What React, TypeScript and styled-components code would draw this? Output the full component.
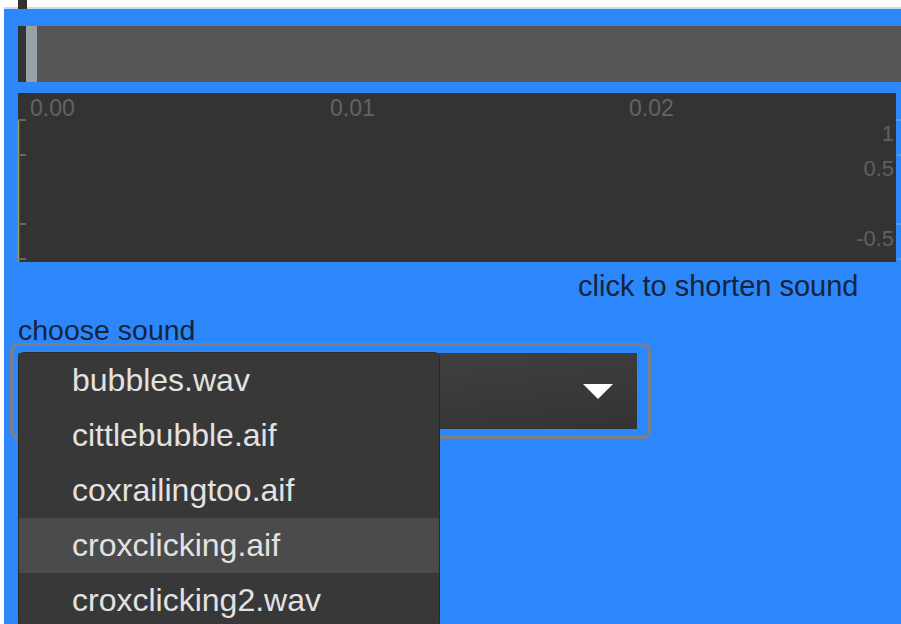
import styled, { createGlobalStyle } from 'styled-components'

const GlobalStyle = createGlobalStyle`
  html, body {
    margin: 0;
    height: 100%;
    overflow: hidden;
    background: #ffffff;
    font-family: "Liberation Sans", Arial, sans-serif;
  }
  #root {
    height: 100%;
  }
`

export const Page = styled.div`
  display: flex;
  flex-direction: column;
  height: 100%;
  padding-left: 4px;
  box-sizing: border-box;
`

export const TopStrip = styled.div`
  height: 7px;
  flex: none;
  display: flex;
  padding-left: 14px;
`

export const TopStub = styled.div`
  width: 9px;
  height: 9px;
  flex: none;
  background: #333333;
  position: relative;
  z-index: 1;
`

export const Panel = styled.div`
  flex: 1;
  background: #2c88fa;
  border-top: 2px solid #c9dcec;
  padding: 17px 0 0 14px;
  display: flex;
  flex-direction: column;
`

export const Timeline = styled.div`
  height: 56px;
  display: flex;
  background: #565656;
`

export const TimelineStart = styled.div`
  width: 8px;
  background: #333333;
`

export const Playhead = styled.div`
  width: 11px;
  background: #9aa0a4;
`

export const Chart = styled.div`
  position: relative;
  margin: 11px 5px 0 0;
  height: 169px;
  background: #333333;
`

export const TimeLabel = styled.span<{ $left: number }>`
  position: absolute;
  top: 4px;
  left: ${p => p.$left}px;
  font-size: 23px;
  line-height: 23px;
  color: #636363;
`

export const LevelLabel = styled.span<{ $top: number }>`
  position: absolute;
  right: 2px;
  top: ${p => p.$top}px;
  font-size: 22px;
  line-height: 22px;
  color: #616161;
`

const Axis = styled.svg`
  position: absolute;
  top: 0;
  left: 0;
  overflow: visible;
`

export const Hint = styled.div`
  margin: 10px 0 0 0;
  padding-left: 560px;
  font-size: 29px;
  line-height: 28px;
  color: #16233a;
`

export const FieldLabel = styled.div`
  margin-top: 16px;
  font-size: 28.5px;
  line-height: 28px;
  color: #16233a;
`

export const SelectFrame = styled.div`
  position: relative;
  align-self: flex-start;
  margin: -1px 0 0 -8px;
  padding: 7px 11px 7px 5px;
  border: 3px solid #7c7f86;
  border-radius: 8px;
`

export const SelectBox = styled.div`
  width: 619px;
  height: 76px;
  display: flex;
  align-items: center;
  justify-content: flex-end;
  padding-right: 24px;
  box-sizing: border-box;
  background: linear-gradient(172deg, #4a4a4a 0%, #3c3c3c 55%, #333333 100%);
`

export const Caret = styled.div`
  width: 0;
  height: 0;
  border-left: 15px solid transparent;
  border-right: 15px solid transparent;
  border-top: 15px solid #ffffff;
`

export const Menu = styled.ul`
  position: absolute;
  left: 5px;
  top: 6px;
  width: 420px;
  margin: 0;
  padding: 0;
  list-style: none;
  background: #383838;
  border: 1px solid #2b2b2b;
  border-radius: 6px;
  overflow: hidden;
  z-index: 2;
`

export const MenuItem = styled.li<{ $active?: boolean }>`
  height: 55px;
  line-height: 55px;
  padding-left: 53px;
  font-size: 32px;
  color: #e2e2e2;
  background: ${p => (p.$active ? '#4b4b4b' : 'transparent')};
  white-space: nowrap;
`

const times = [
  { text: '0.00', left: 12 },
  { text: '0.01', left: 312 },
  { text: '0.02', left: 611 },
]

const levels = [
  { text: '1', top: 30 },
  { text: '0.5', top: 65 },
  { text: '-0.5', top: 135 },
]

const ticks = [27, 62, 131, 166]

const sounds = [
  'bubbles.wav',
  'cittlebubble.aif',
  'coxrailingtoo.aif',
  'croxclicking.aif',
  'croxclicking2.wav',
]

const App = () => {
  return (
    <>
      <GlobalStyle />
      <Page>
        <TopStrip>
          <TopStub />
        </TopStrip>
        <Panel>
          <Timeline>
            <TimelineStart />
            <Playhead />
          </Timeline>
          <Chart>
            <Axis width="878" height="169">
              <line x1="0.5" y1="27" x2="0.5" y2="169" stroke="#9c9a5c" strokeWidth="1.5" />
              {ticks.map(y => (
                <line key={y} x1="0" y1={y} x2="8" y2={y} stroke="#7a7a7a" strokeWidth="1.5" />
              ))}
              {ticks.map(y => (
                <line key={'r' + y} x1="879" y1={y} x2="883" y2={y} stroke="#8fb3e0" strokeWidth="1" />
              ))}
            </Axis>
            {times.map(t => (
              <TimeLabel key={t.text} $left={t.left}>{t.text}</TimeLabel>
            ))}
            {levels.map(l => (
              <LevelLabel key={l.text} $top={l.top}>{l.text}</LevelLabel>
            ))}
          </Chart>
          <Hint>click to shorten sound</Hint>
          <FieldLabel>choose sound</FieldLabel>
          <SelectFrame>
            <SelectBox>
              <Caret />
            </SelectBox>
            <Menu>
              {sounds.map((s, i) => (
                <MenuItem key={s} $active={i === 3}>{s}</MenuItem>
              ))}
            </Menu>
          </SelectFrame>
        </Panel>
      </Page>
    </>
  )
}

export default App
